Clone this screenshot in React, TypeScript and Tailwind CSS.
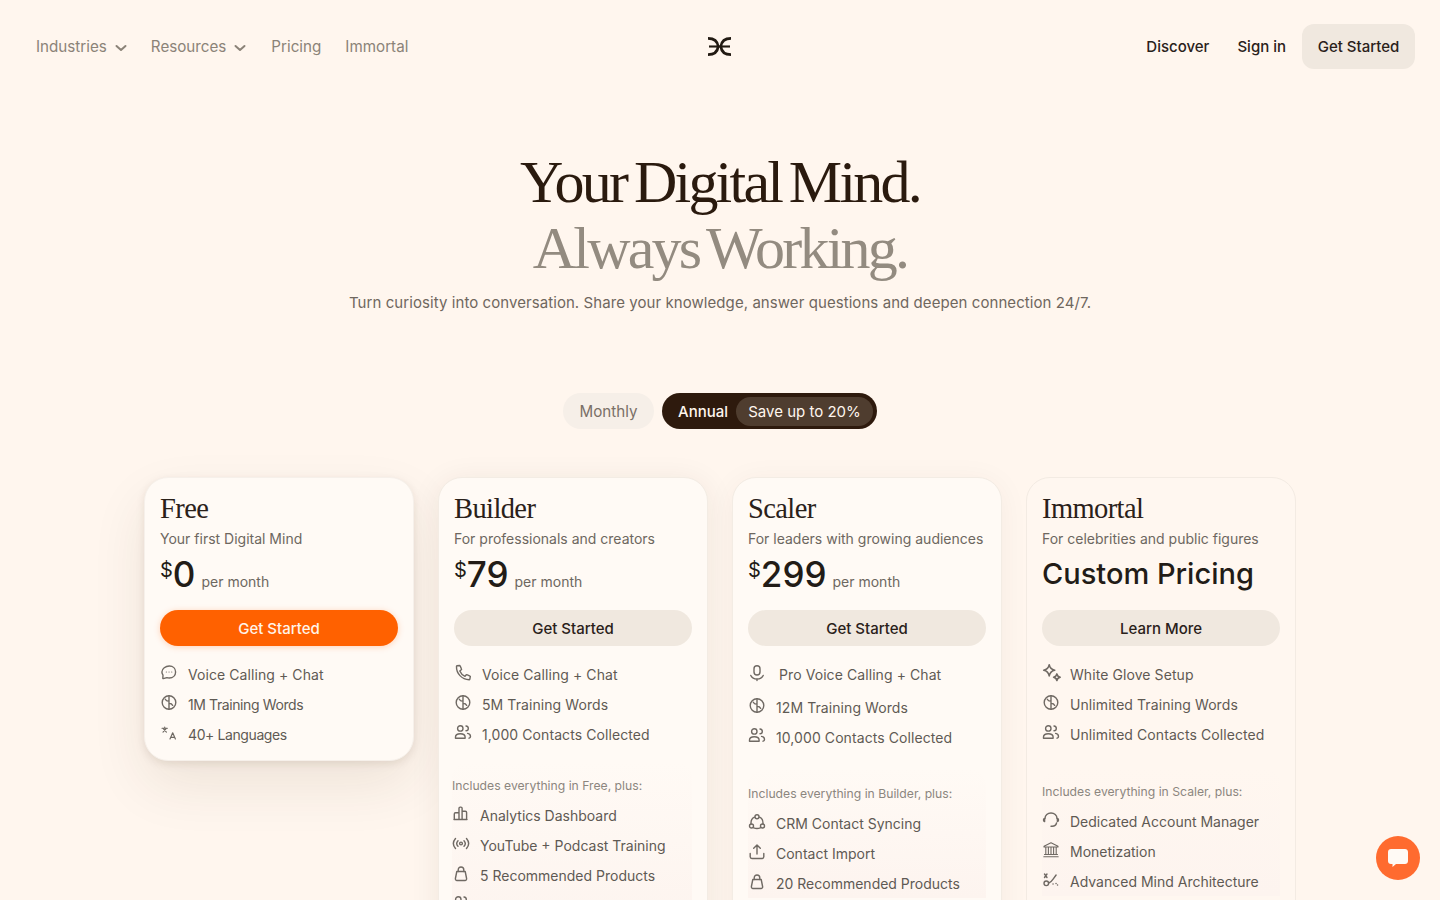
import React from "react";

const S = ({ children, size = 18, cls = "" }: { children: React.ReactNode; size?: number; cls?: string }) => (
  <svg width={size} height={size} viewBox="0 0 18 18" fill="none" stroke="currentColor" strokeWidth="1.4" strokeLinecap="round" strokeLinejoin="round" className={"shrink-0 " + cls}>
    {children}
  </svg>
);

const Chat = () => (
  <S>
    <path d="M9.300 2c3.700 0 6.300 2.500 6.300 6s-2.700 6-6.300 6c-.9 0-1.700-.1-2.400-.4l-3.600 1c-.3.1-.5-.1-.5-.4l.2-3C2.200 10 1.900 9 1.900 8c0-3.400 3.700-6 7.400-6Z" />
    <path d="M6.300 8h.1M9 8h.1M11.700 8h.1" strokeWidth="1.100" />
  </S>
);
const Coin = () => (
  <S>
    <circle cx="9" cy="8.500" r="6.800" />
    <path d="M9 1.700v13.600M5.300 5.200C5.800 6.500 7.200 7.200 9 7.200M9 9.400c1.800 0 3.200.7 3.700 2" />
  </S>
);
const Lang = () => (
  <S>
    <path d="M2 4.300h5.400M4.700 3v1.300M3 8.200l3.400-3.900M3 4.300l3.400 3.900" strokeWidth="1.100" />
    <path d="M10 15l2.700-6.200L15.400 15M11 13.300h3.400" strokeWidth="1.200" />
  </S>
);
const Phone = () => (
  <S>
    <path d="M3 1.800 5.600 1.500c.3 0 .5.100.6.400l1.300 3.200c.1.200 0 .5-.2.600L5.800 7c.9 2.200 2.900 4.300 5.200 5.300l1.300-1.500c.2-.2.400-.2.600-.1l3.100 1.400c.3.100.4.400.3.600l-.5 2.600c-.1.300-.3.500-.6.500C7.800 15.500 2.200 9.500 2.500 2.300c0-.2.200-.5.500-.5Z" />
  </S>
);
const Users = () => (
  <S>
    <circle cx="6.300" cy="4.400" r="2.700" />
    <path d="M1.500 14.300v-1.200c0-2 1.600-3.400 4.800-3.400s4.800 1.400 4.800 3.400v1.200Z" />
    <path d="M12 2c1.300.1 2.300 1.100 2.300 2.400s-1 2.300-2.300 2.400M13.600 9.400c1.800.4 2.900 1.500 2.900 3 0 .9-.5 1.500-1.400 1.800" />
  </S>
);
const Bars = () => (
  <S>
    <path d="M7 14.500V3.300C7 2.600 7.500 2.100 8.200 2.100h.7c.7 0 1.200.5 1.200 1.200v11.200M2.300 14.500V9C2.300 8.300 2.800 7.800 3.500 7.800H7M10.100 6.300h3.300c.7 0 1.200.5 1.200 1.200v7M2 14.500h13" />
  </S>
);
const Radio = () => (
  <S>
    <circle cx="9" cy="8.500" r="1.400" />
    <path d="M6 5.700c-1.500 1.600-1.500 4 0 5.600M12 5.700c1.500 1.600 1.500 4 0 5.600M3.500 3.500c-2.600 3-2.600 7 0 10M14.500 3.500c2.600 3 2.600 7 0 10" />
  </S>
);
const Bag = () => (
  <S>
    <path d="M6.200 6.500V5c0-1.800 1.200-3 2.800-3s2.800 1.200 2.800 3v1.500" />
    <path d="M4.800 6.500h8.400l1.400 7c.2 1-.5 2-1.600 2H5c-1.100 0-1.800-1-1.600-2Z" />
  </S>
);
const Mic = () => (
  <S>
    <rect x="6" y="1.800" width="6" height="9.200" rx="3" />
    <path d="M2.800 11.500C4 14 6.300 15 9 15s5-1 6.200-3.500M9 15v1.500" />
  </S>
);
const Sync = () => (
  <S>
    <circle cx="9" cy="3.700" r="2" />
    <circle cx="3.500" cy="13" r="2" />
    <circle cx="14.500" cy="13" r="2" />
    <path d="M6.500 4.200C4 5.300 2.800 8 3 11M11.500 4.200c2.500 1.100 3.700 3.800 3.500 6.800M5.700 14.800c2 .8 4.600.8 6.600 0" />
  </S>
);
const Upload = () => (
  <S>
    <path d="M9 11V2.200M5.700 5.300 9 2l3.300 3.300M2.200 10.500v3.300c0 .9.700 1.700 1.700 1.700h10.200c1 0 1.700-.8 1.700-1.700v-3.300" />
  </S>
);
const Sparkle = () => (
  <S size={20}>
    <path d="M6.500 1.500c.6 3.300 1.800 4.500 5 5-3.200.6-4.400 1.800-5 5.100-.6-3.300-1.800-4.500-5-5.100 3.200-.5 4.400-1.700 5-5Z" />
    <path d="M13.400 9.800c.3 2 1 2.700 3 3-2 .4-2.700 1-3 3-.4-2-1-2.600-3-3 2-.3 2.600-1 3-3Z" />
  </S>
);
const Headset = () => (
  <S>
    <path d="M3 7.500C3 4.300 5.700 2 9 2s6 2.300 6 5.500" />
    <path d="M2.600 7.500c-.7.200-1.100.8-1.100 1.500s.4 1.400 1.100 1.600ZM15.400 7.500c.7.200 1.100.8 1.100 1.500s-.4 1.400-1.100 1.600Z" />
    <path d="M14.500 12c-.4 2-2 3.200-4.300 3.200H9" />
  </S>
);
const Bank = () => (
  <S>
    <path d="M2 5.200 9 1.800l7 3.400v.8H2ZM3.800 6.500v6.500M6.400 6.500v6.500M9 6.500v6.500M11.600 6.500v6.500M14.200 6.500v6.500M2.500 13.500h13M1.800 15.800h14.400" strokeWidth="1.100" />
  </S>
);
const Arch = () => (
  <S>
    <circle cx="4.300" cy="12.300" r="2.300" />
    <path d="M6.800 12c2-.4 3.300-2.300 4.300-3.800l3-4.200" />
    <path d="M2.500 3 5 6.500M5 3 2.500 6.500M11 13h.1M14 12.500h.1M15.500 14h.1" />
  </S>
);

type F = { i: React.ReactNode; t: string; ml?: string; h?: string; tr?: string };
type Plan = {
  name: string;
  desc: string;
  price?: string;
  btn: string;
  primary?: boolean;
  cardCls: string;
  features: F[];
  incl?: string;
  inclCls?: string;
  inclItems?: F[];
};

const plans: Plan[] = [
  {
    name: "Free",
    desc: "Your first Digital Mind",
    price: "0",
    btn: "Get Started",
    primary: true,
    cardCls: "bg-[#fffaf5] shadow-[0_24px_56px_rgba(70,40,10,0.09),0_3px_8px_rgba(70,40,10,0.1)] h-[284px] border-[#f6f0ea]",
    features: [
      { i: <Chat />, t: "Voice Calling + Chat" },
      { i: <Coin />, t: "1M Training Words", tr: "tracking-[-0.4px]" },
      { i: <Lang />, t: "40+ Languages", tr: "tracking-[-0.4px]" },
    ],
  },
  {
    name: "Builder",
    desc: "For professionals and creators",
    price: "79",
    btn: "Get Started",
    cardCls: "bg-[#fffaf5] shadow-[0_4px_30px_rgba(70,40,10,0.08)] border-[#f3ece4] pb-[60px]",
    features: [
      { i: <Phone />, t: "Voice Calling + Chat" },
      { i: <Coin />, t: "5M Training Words" },
      { i: <Users />, t: "1,000 Contacts Collected" },
    ],
    incl: "Includes everything in Free, plus:",
    inclCls: "mt-[12px] pt-[16px] -ml-[2px]",
    inclItems: [
      { i: <Bars />, t: "Analytics Dashboard", tr: "tracking-[0px]" },
      { i: <Radio />, t: "YouTube + Podcast Training", tr: "tracking-[0px]" },
      { i: <Bag />, t: "5 Recommended Products", tr: "tracking-[0px]" },
      { i: <Users />, t: "" },
    ],
  },
  {
    name: "Scaler",
    desc: "For leaders with growing audiences",
    price: "299",
    btn: "Get Started",
    cardCls: "bg-[#fffaf5] shadow-[0_4px_30px_rgba(70,40,10,0.05)] border-[#f3ece4] pb-[60px]",
    features: [
      { i: <Mic />, t: "Pro Voice Calling + Chat", ml: "ml-[3px]", h: "h-[33px] pb-[3px]" },
      { i: <Coin />, t: "12M Training Words" },
      { i: <Users />, t: "10,000 Contacts Collected" },
    ],
    incl: "Includes everything in Builder, plus:",
    inclCls: "mt-[17px] pt-[16px]",
    inclItems: [
      { i: <Sync />, t: "CRM Contact Syncing", tr: "tracking-[0px]" },
      { i: <Upload />, t: "Contact Import", tr: "tracking-[0px]" },
      { i: <Bag />, t: "20 Recommended Products", tr: "tracking-[0px]" },
    ],
  },
  {
    name: "Immortal",
    desc: "For celebrities and public figures",
    btn: "Learn More",
    cardCls: "bg-[#fff7f0] border-[#f3ebe3] pb-[60px]",
    features: [
      { i: <Sparkle />, t: "White Glove Setup" },
      { i: <Coin />, t: "Unlimited Training Words" },
      { i: <Users />, t: "Unlimited Contacts Collected" },
    ],
    incl: "Includes everything in Scaler, plus:",
    inclCls: "mt-[18px] pt-[16px]",
    inclItems: [
      { i: <Headset />, t: "Dedicated Account Manager", tr: "tracking-[0px]" },
      { i: <Bank />, t: "Monetization", tr: "tracking-[0px]" },
      { i: <Arch />, t: "Advanced Mind Architecture", tr: "tracking-[0px]" },
    ],
  },
];

const Row = ({ f }: { f: F }) => (
  <div className={"flex items-center whitespace-nowrap text-[14px] text-[#5f5a54] " + (f.tr ?? "tracking-[0.08px]") + " " + (f.h ?? "h-[30px]")}>
    <span className="flex w-[28px] -translate-y-[1px] justify-start text-[#6f6963]">{f.i}</span>
    <span className={f.ml ?? ""}>{f.t}</span>
  </div>
);

function Card({ p }: { p: Plan }) {
  return (
    <div className={"w-[270px] shrink-0 self-start rounded-[24px] border px-[15px] pt-[15px] " + p.cardCls}>
      <h3 className="h-[30px] font-['Liberation_Serif',serif] text-[28.500px] leading-[31px] tracking-[-0.6px] text-[#2a211a]">{p.name}</h3>
      <p className="mt-[6px] h-[20px] whitespace-nowrap text-[14px] leading-[20px] text-[#6d6760]">{p.desc}</p>
      <div className="mt-[6px] flex h-[40px] items-end">
        {p.price ? (
          <>
            <span className="mb-[14px] text-[20px] leading-[22px] text-[#221c17]">$</span>
            <span className="text-[35px] font-medium leading-[41px] text-[#221c17]">{p.price}</span>
            <span className="mb-[3px] ml-[6px] text-[14px] leading-[20px] text-[#6d6760]">per month</span>
          </>
        ) : (
          <span className="mb-[2px] text-[29px] font-medium leading-[38px] text-[#221c17]">Custom Pricing</span>
        )}
      </div>
      <button
        className={
          "mt-[15px] flex h-[36px] w-full items-center justify-center rounded-full pt-[2px] text-[15px] font-medium " +
          (p.primary ? "bg-[#ff6100] text-[#fff4ea] shadow-[0_1px_6px_rgba(255,97,0,0.25)]" : "bg-[#f0e8df] text-[#2a211a]")
        }
      >
        {p.btn}
      </button>
      <div className="mt-[13px]">
        {p.features.map((f) => (
          <Row key={f.t} f={f} />
        ))}
      </div>
      {p.incl && (
        <div className={"rounded-t-[16px] bg-gradient-to-b from-transparent to-[#fdf4ef] " + (p.inclCls ?? "")}>
          <p className="mb-[5px] whitespace-nowrap text-[12.200px] leading-[18px] text-[#8c867f]">{p.incl}</p>
          {p.inclItems!.map((f, i) => (
            <Row key={i} f={f} />
          ))}
        </div>
      )}
    </div>
  );
}

const Chevron = () => (
  <svg width="12" height="8" viewBox="0 0 12 8" fill="none" stroke="currentColor" strokeWidth="2" strokeLinecap="round" strokeLinejoin="round" className="ml-[8px] mt-[2px]">
    <path d="M1.500 2 6 6l4.500-4" />
  </svg>
);

export default function App() {
  return (
    <div className="relative h-screen overflow-hidden bg-[#fff6ee] font-['Inter',sans-serif]">
      <header className="grid h-[93px] grid-cols-[1fr_auto_1fr] items-center pl-[36px] pr-[25px]">
        <nav className="flex items-center gap-[24px] pt-[2px] text-[15.200px] text-[#8b8378]">
          <span className="flex items-center">Industries<Chevron /></span>
          <span className="flex items-center pr-[1px]">Resources<Chevron /></span>
          <span>Pricing</span>
          <span>Immortal</span>
        </nav>
        <svg width="25" height="21" viewBox="0 0 25 21" fill="none" stroke="#221a12" strokeLinecap="butt" className="mr-[12px]">
          <path d="M1 2.300C7 2.300 10.500 5 11.200 10.500 10.500 16 7 18.700 1 18.700M24 2.300C18 2.300 14.500 5 13.800 10.500 14.500 16 18 18.700 24 18.700" strokeWidth="2.700" />
          <path d="M2 10.500h21" strokeWidth="2.100" />
        </svg>
        <div className="flex items-center justify-end text-[15px] font-medium text-[#2a211a]">
          <span className="mr-[28px] pt-[2px]">Discover</span>
          <span className="mr-[16px] pt-[2px]">Sign in</span>
          <button className="h-[45px] w-[113px] rounded-[12px] bg-[#f0e8df] pt-[1px]">Get Started</button>
        </div>
      </header>

      <section className="flex flex-col items-center pt-[56px]">
        <h1 className="text-center font-['Liberation_Serif',serif] text-[60px] font-normal leading-[66px] tracking-[-2.780px] [word-spacing:-4.500px] text-[#2a1a0e]">
          Your Digital Mind.
          <br />
          <span className="text-[#938b80]">Always Working.</span>
        </h1>
        <p className="mt-[10px] text-[15px] leading-[24px] tracking-[0.07px] text-[#6f675e]">
          Turn curiosity into conversation. Share your knowledge, answer questions and deepen connection 24/7.
        </p>
        <div className="mt-[78px] flex items-center gap-[8px] text-[15px]">
          <span className="flex h-[36px] w-[91px] items-center justify-center rounded-full bg-[#f6efe8] text-[15.200px] text-[#7a7067]"><span className="mt-[2px]">Monthly</span></span>
          <span className="flex h-[36px] w-[215px] items-center rounded-full bg-[#2e1a0d] pl-[16px] pr-[4px] text-[#fff6ee]">
            <span className="mt-[2px] font-medium">Annual</span>
            <span className="ml-auto flex h-[29px] w-[137px] items-center justify-center rounded-full bg-[#4f3d2f]"><span className="mt-[2px]">Save up to 20%</span></span>
          </span>
        </div>
      </section>

      <section className="mt-[48px] flex justify-center gap-[24px]">
        {plans.map((p) => (
          <Card key={p.name} p={p} />
        ))}
      </section>

      <button className="fixed bottom-[20px] right-[20px] flex h-[44px] w-[44px] items-center justify-center rounded-full bg-[#ff6b2f]">
        <svg width="22" height="20" viewBox="0 0 22 20" fill="#fffaf5">
          <path d="M4 1h14c1.700 0 3 1.300 3 3v9c0 1.700-1.300 3-3 3H9l-3.500 3v-3H4c-1.700 0-3-1.300-3-3V4c0-1.700 1.300-3 3-3Z" />
        </svg>
      </button>
    </div>
  );
}
